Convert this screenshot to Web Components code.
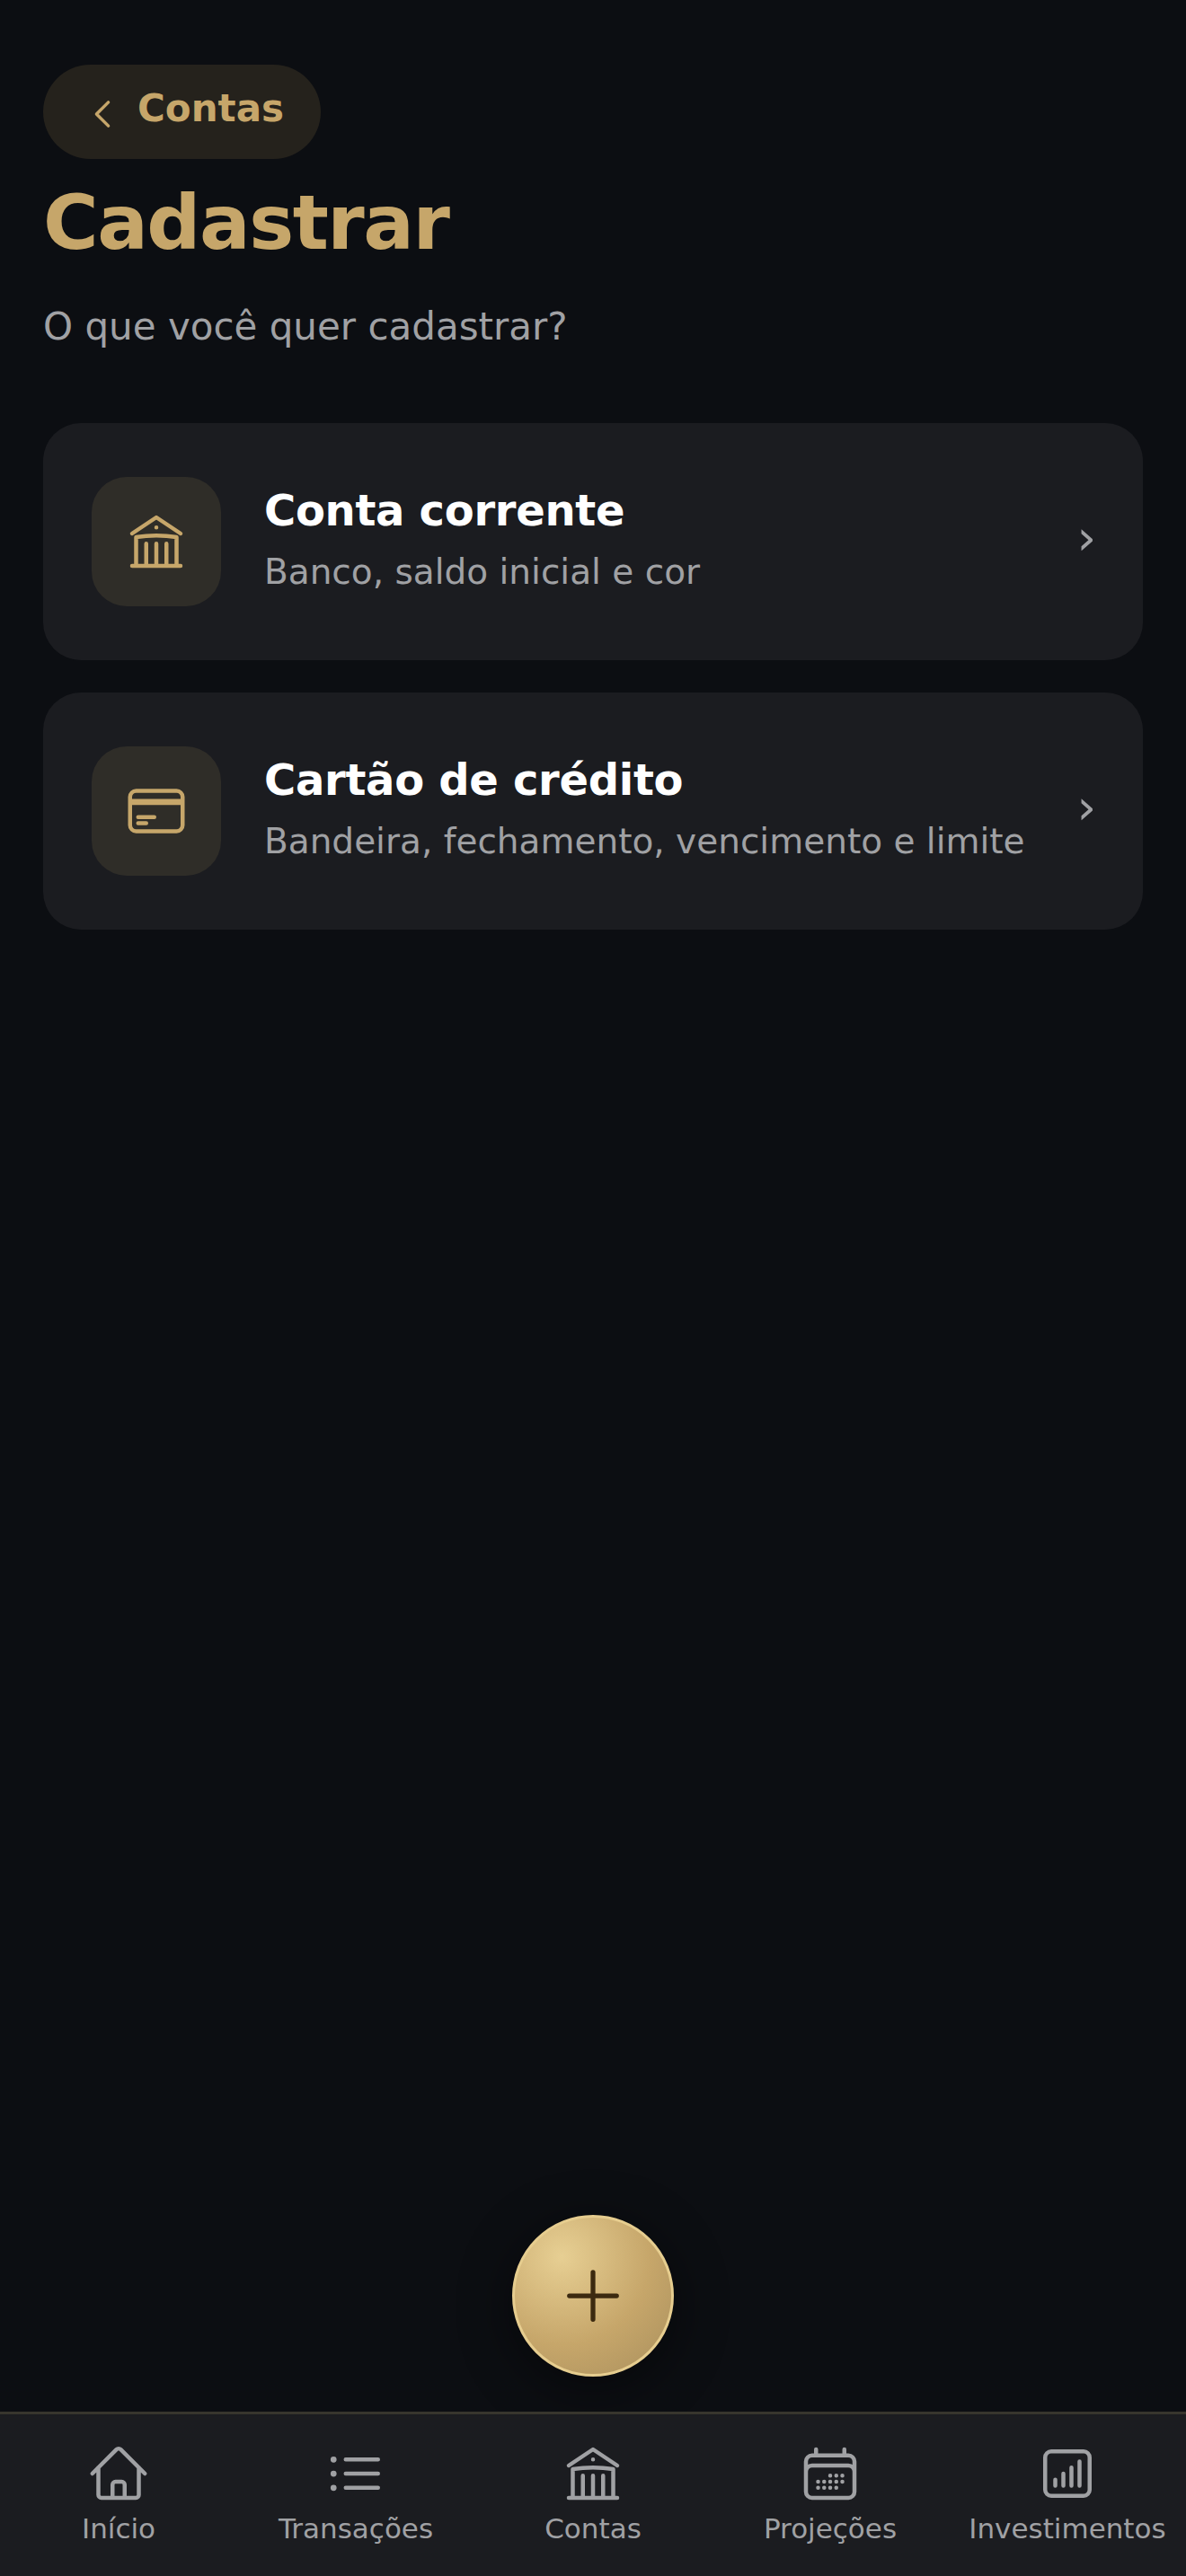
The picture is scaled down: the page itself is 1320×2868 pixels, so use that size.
<!DOCTYPE html>
<html lang="pt-BR"><head><meta charset="utf-8"><title>Cadastrar</title>
<style>
html,body{margin:0;height:100%;background:#0c0e12;font-family:"DejaVu Sans",sans-serif}
</style></head><body>
<app-screen>
  <back-pill>Contas</back-pill>
  <page-head slot="head" title-text="Cadastrar" sub="O que você quer cadastrar?"></page-head>
  <option-card icon="bank" title-text="Conta corrente" sub="Banco, saldo inicial e cor"></option-card>
  <option-card icon="card" title-text="Cartão de crédito" sub="Bandeira, fechamento, vencimento e limite"></option-card>
</app-screen>
<script>
const P={
home:'m2.25 12 8.954-8.955c.44-.439 1.152-.439 1.591 0L21.75 12M4.5 9.75v10.125c0 .621.504 1.125 1.125 1.125H9.75v-4.875c0-.621.504-1.125 1.125-1.125h2.25c.621 0 1.125.504 1.125 1.125V21h4.125c.621 0 1.125-.504 1.125-1.125V9.75M8.25 21h8.25',
list:'M8.25 6.75h12M8.25 12h12m-12 5.25h12M3.75 6.75h.007v.008H3.75V6.75Zm.375 0a.375.375 0 1 1-.75 0 .375.375 0 0 1 .75 0ZM3.75 12h.007v.008H3.75V12Zm.375 0a.375.375 0 1 1-.75 0 .375.375 0 0 1 .75 0Zm-.375 5.25h.007v.008H3.75v-.008Zm.375 0a.375.375 0 1 1-.75 0 .375.375 0 0 1 .75 0Z',
bank:'M12 21v-8.25M15.75 21v-8.25M8.25 21v-8.25M3 9l9-6 9 6m-1.5 12V10.332A48.36 48.36 0 0 0 12 9.75c-2.551 0-5.056.2-7.5.582V21M3 21h18M12 6.75h.008v.008H12V6.75Z',
card:'M2.25 8.25h19.5M2.25 9h19.5m-16.5 5.25h6m-6 2.25h3m-3.75 3h15a2.25 2.25 0 0 0 2.25-2.25V6.75A2.25 2.25 0 0 0 19.5 4.5h-15a2.25 2.25 0 0 0-2.25 2.25v10.5A2.25 2.25 0 0 0 4.5 19.5Z',
cal:'M6.75 3v2.25M17.25 3v2.25M3 18.75V7.5a2.25 2.25 0 0 1 2.25-2.25h13.5A2.25 2.25 0 0 1 21 7.5v11.25m-18 0A2.25 2.25 0 0 0 5.25 21h13.5A2.25 2.25 0 0 0 21 18.75m-18 0v-7.5A2.25 2.25 0 0 1 5.25 9h13.5A2.25 2.25 0 0 1 21 11.25v7.5m-9-6h.008v.008H12v-.008ZM12 15h.008v.008H12V15Zm0 2.25h.008v.008H12v-.008ZM9.75 15h.008v.008H9.75V15Zm0 2.25h.008v.008H9.75v-.008ZM7.5 15h.008v.008H7.5V15Zm0 2.25h.008v.008H7.5v-.008Zm6.75-4.5h.008v.008h-.008v-.008Zm0 2.25h.008v.008h-.008V15Zm0 2.25h.008v.008h-.008v-.008Zm2.25-4.5h.008v.008H16.5v-.008Zm0 2.25h.008v.008H16.5V15Z',
chart:'M7.5 14.25v2.25m3-4.5v4.5m3-6.75v6.75m3-9v9M6 20.25h12A2.25 2.25 0 0 0 20.25 18V6A2.25 2.25 0 0 0 18 3.75H6A2.25 2.25 0 0 0 3.75 6v12A2.25 2.25 0 0 0 6 20.25Z',
plus:'M12 4.5v15m7.5-7.5h-15',
left:'M15.75 19.5 8.25 12l7.5-7.5'
};
const svg=(n,s,w=1.5)=>`<svg width="${s}" height="${s}" viewBox="0 0 24 24" fill="none" stroke="currentColor" stroke-width="${w}" stroke-linecap="round" stroke-linejoin="round" aria-hidden="true"><path d="${P[n]}"/></svg>`;
class Base extends HTMLElement{ render(h){ if(!this.shadowRoot) this.attachShadow({mode:'open'}); this.shadowRoot.innerHTML=h; } }
customElements.define('back-pill',class extends Base{connectedCallback(){this.render(`<style>
:host{display:inline-flex;box-sizing:border-box;height:105px;width:309px;border-radius:52.5px;background:#25221c;color:#c6a66a;align-items:center;padding-left:45px;gap:18px}
svg{flex:none;position:relative;top:2px}
span{font-size:42px;font-weight:700;line-height:48px;position:relative;top:-4px}
</style>${svg('left',42,2)}<span><slot></slot></span>`)}});
customElements.define('page-head',class extends Base{connectedCallback(){this.render(`<style>
:host{display:block}
h1{margin:0;color:#c6a66a;font-size:84px;line-height:98px;font-weight:700;letter-spacing:-1.5px}
p{margin:42px 0 0;color:#a0a1a4;font-size:42px;line-height:50px}
</style><h1>${this.getAttribute('title-text')}</h1><p>${this.getAttribute('sub')}</p>`)}});
customElements.define('option-card',class extends Base{connectedCallback(){this.render(`<style>
:host{display:flex;align-items:center;box-sizing:border-box;height:264px;border-radius:42px;background:#1b1c20;padding:0 52px 0 54px;gap:48px}
.i{flex:none;width:144px;height:144px;border-radius:39px;background:#2f2d28;color:#c6a66a;display:flex;align-items:center;justify-content:center}
.t{flex:1;min-width:0;padding-bottom:6px}
h2{margin:0;color:#fff;font-size:48px;line-height:58px;font-weight:700;letter-spacing:-.3px}
p{margin:16px 0 0;color:#a0a1a4;font-size:39px;line-height:48px;white-space:nowrap}
.c{flex:none;color:#a0a1a4;font-size:54px;line-height:54px;position:relative;top:-4px}
</style><div class="i">${svg(this.getAttribute('icon'),72)}</div><div class="t"><h2>${this.getAttribute('title-text')}</h2><p>${this.getAttribute('sub')}</p></div><div class="c">›</div>`)}});
customElements.define('nav-item',class extends Base{connectedCallback(){this.render(`<style>
:host{flex:1;min-width:0;display:flex;flex-direction:column;align-items:center;color:#a0a1a4}
svg{display:block}
span{font-size:31px;line-height:42px;white-space:nowrap;margin-top:4px}
</style>${svg(this.getAttribute('icon'),72)}<span>${this.getAttribute('label')}</span>`)}});
customElements.define('bottom-nav',class extends Base{connectedCallback(){this.render(`<style>
:host{display:flex;box-sizing:border-box;height:183px;background:#1b1c20;border-top:3px solid #37352d;padding-top:30px;position:relative}
</style><slot></slot>`)}});
customElements.define('fab-button',class extends Base{connectedCallback(){this.render(`<style>
:host{position:absolute;left:570px;top:2466px;box-sizing:border-box;width:180px;height:180px;border-radius:50%;border:3px solid #e6cd8f;background:radial-gradient(circle at 30% 25%,#e7cf93 0,#c6a66a 55%,#a98f5d 100%);color:#3c2a10;display:flex;align-items:center;justify-content:center;box-shadow:0 12px 60px rgba(0,0,0,.45)}
</style>${svg('plus',84)}`)}});
customElements.define('app-screen',class extends Base{connectedCallback(){
 const kids=[...this.children];
 this.render(`<style>
:host{display:flex;flex-direction:column;box-sizing:border-box;height:2868px;position:relative;overflow:hidden;background:#0c0e12}
main{flex:1;display:flex;flex-direction:column;box-sizing:border-box;padding:72px 48px 0}
.head{margin:22px 0 82px}
.cards{display:flex;flex-direction:column;gap:36px}
</style><main><div class="top"><slot name="pill"></slot></div><div class="head"><slot name="head"></slot></div><div class="cards"><slot></slot></div></main>
<fab-button></fab-button>
<bottom-nav>
<nav-item icon="home" label="Início"></nav-item><nav-item icon="list" label="Transações"></nav-item><nav-item icon="bank" label="Contas"></nav-item><nav-item icon="cal" label="Projeções"></nav-item><nav-item icon="chart" label="Investimentos"></nav-item>
</bottom-nav>`);
 kids[0].slot='pill';
}});
</script>
</body></html>
